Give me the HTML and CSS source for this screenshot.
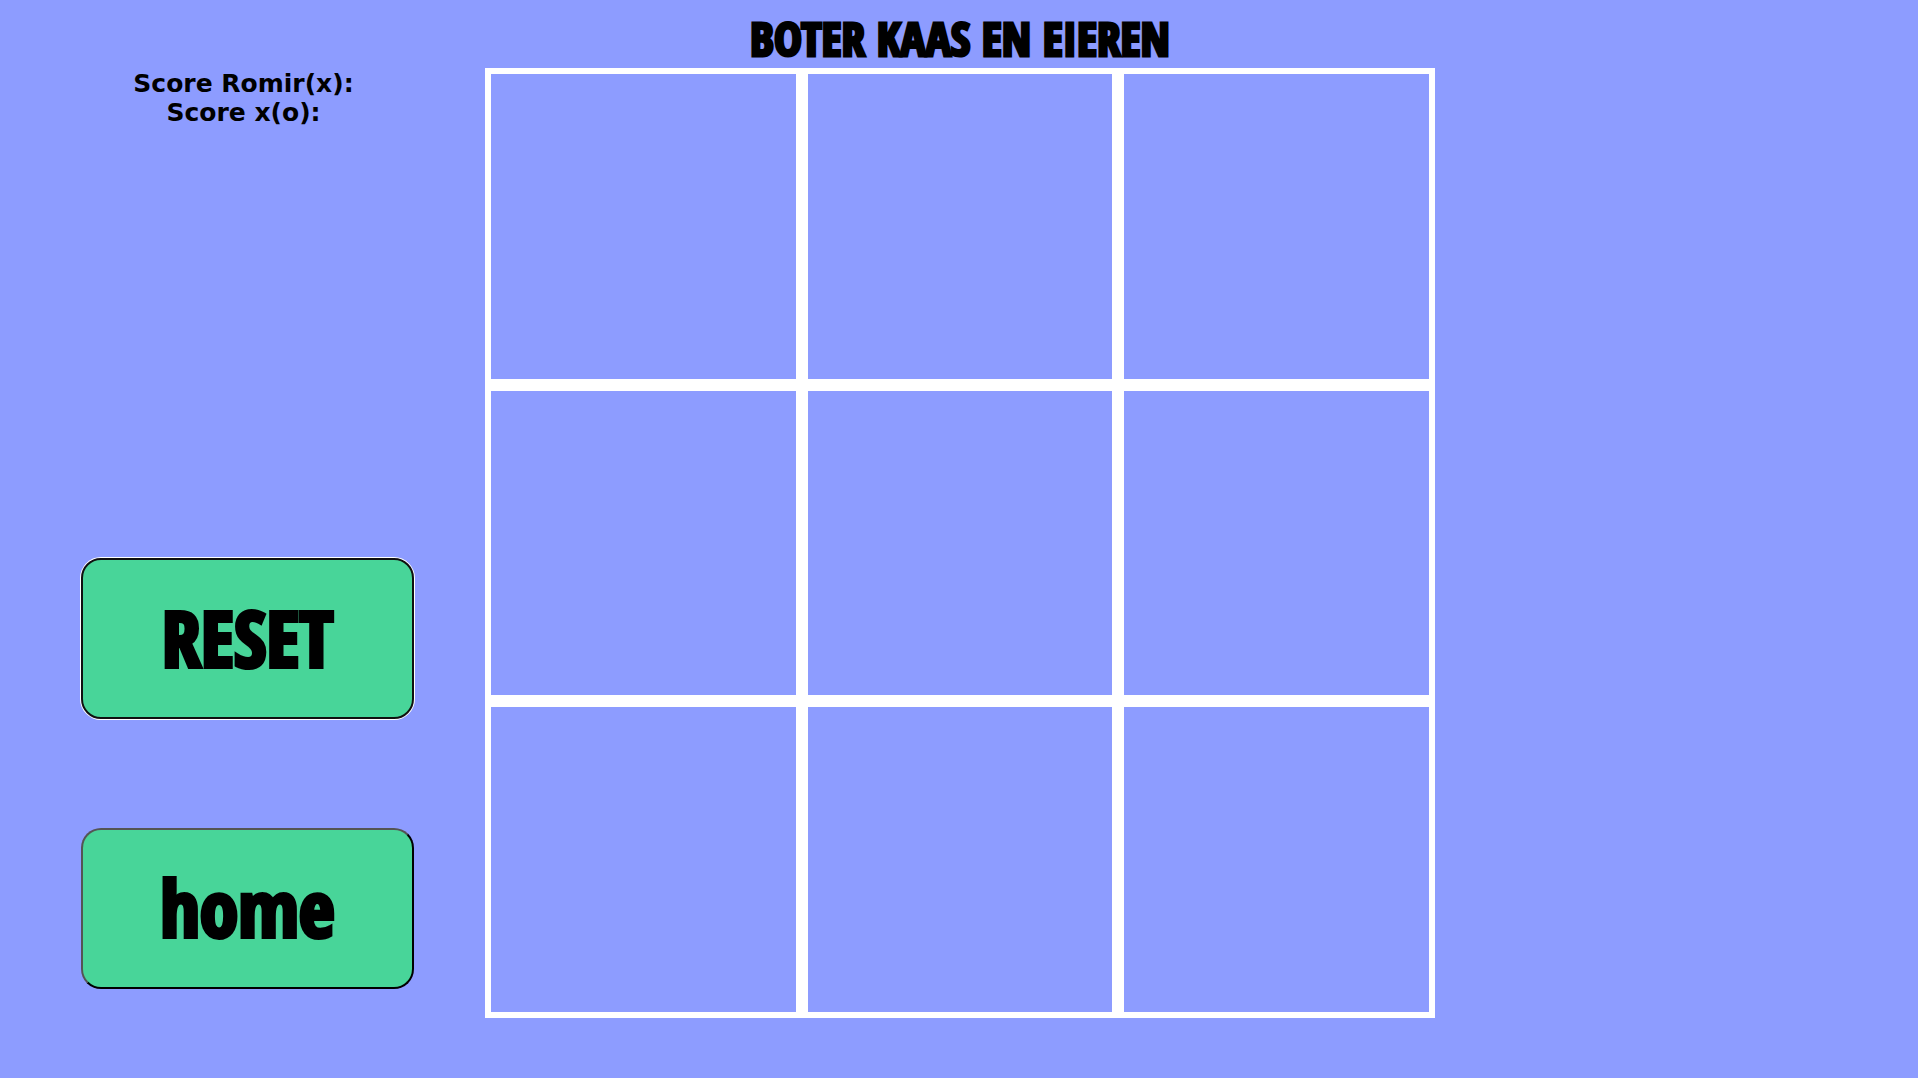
FILE: index.html
```html
<!DOCTYPE html>
<html lang="nl">
<head>
<meta charset="utf-8">
<title>Boter kaas en eieren</title>
<link rel="stylesheet" href="styles.css">
</head>
<body>
<main class="game">
  <h1 class="title">BOTER KAAS EN EIEREN</h1>
  <aside class="side">
    <div class="scores">
      <p class="score">Score Romir(x):</p>
      <p class="score">Score x(o):</p>
    </div>
    <div class="actions">
      <button class="action action-focused" type="button">RESET</button>
      <button class="action" type="button">home</button>
    </div>
  </aside>
  <div class="board">
    <button class="cell" type="button"></button>
    <button class="cell" type="button"></button>
    <button class="cell" type="button"></button>
    <button class="cell" type="button"></button>
    <button class="cell" type="button"></button>
    <button class="cell" type="button"></button>
    <button class="cell" type="button"></button>
    <button class="cell" type="button"></button>
    <button class="cell" type="button"></button>
  </div>
</main>
</body>
</html>
```

FILE: styles.css
```css
* {
  box-sizing: border-box;
}

body {
  margin: 0;
  min-height: 100vh;
  background: #8d9cff;
  color: #000;
  font-family: Verdana, "DejaVu Sans", sans-serif;
}

.game {
  display: grid;
  grid-template-columns: 1fr auto 1fr;
  grid-template-rows: 68px auto;
  padding-left: 2px;
}

.title {
  grid-column: 2;
  margin: 0;
  padding-top: 8px;
  font-family: Impact, "Open Sans Condensed", "Liberation Sans Narrow", sans-serif;
  font-size: 47px;
  font-weight: 800;
  line-height: 60px;
  text-align: center;
  white-space: nowrap;
  -webkit-text-stroke: 3px #000;
}

.side {
  grid-column: 1;
  display: flex;
  flex-direction: column;
  justify-content: space-between;
  align-items: center;
  padding: 1px 0 29px;
}

.score {
  margin: 0;
  font-size: 25px;
  font-weight: bold;
  line-height: 29px;
  text-align: center;
}

.actions {
  display: flex;
  flex-direction: column;
  gap: 109px;
  padding-left: 8px;
}

.action {
  min-width: 333px;
  padding: 28px 72px 30px;
  border: 2px outset #000;
  border-radius: 20px;
  background: #48d599;
  color: #000;
  font-family: Impact, "Open Sans Condensed", "Liberation Sans Narrow", sans-serif;
  font-size: 78px;
  font-weight: 800;
  line-height: 99px;
  -webkit-text-stroke: 4px #000;
}

.action-focused {
  border: 2px solid #101010;
  box-shadow: 0 0 0 1px #fff;
}

.board {
  display: grid;
  grid-template: repeat(3, 1fr) / repeat(3, 1fr);
  width: calc(100vh - 128px);
  height: calc(100vh - 128px);
}

.cell {
  padding: 0;
  border: 6px solid #fff;
  background: transparent;
}
```
